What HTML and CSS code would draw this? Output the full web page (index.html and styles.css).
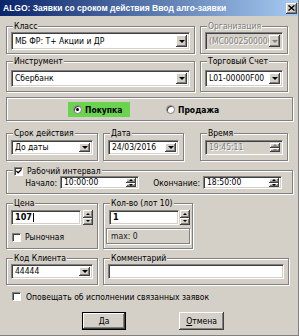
FILE: index.html
```html
<!DOCTYPE html>
<html>
<head>
<meta charset="utf-8">
<link rel="stylesheet" href="styles.css">
</head>
<body>
<div class="win">
  <div class="titlebar">
    <span class="title">ALGO: Заявки со сроком действия Ввод алго-заявки</span>
    <span class="close"><svg width="7" height="6" viewBox="0 0 7 6"><path d="M0.5 0.5 L6.5 5.5 M6.5 0.5 L0.5 5.5" stroke="#000" stroke-width="1.4"/></svg></span>
  </div>
  <div class="content">
    <div class="row r1">
      <div class="grp g-wide g-r1">
        <span class="lbl">Класс</span>
        <div class="field h18"><span class="val">МБ ФР: Т+ Акции и ДР</span><span class="btn dd"><i class="tri"></i></span></div>
      </div>
      <div class="grp g-right g-r1">
        <span class="lbl dis-text">Организация</span>
        <div class="field h18 disabled"><span class="val clip">(МС0002500000</span><span class="btn dd"><i class="tri gray"></i></span></div>
      </div>
    </div>

    <div class="row r2">
      <div class="grp g-wide g-r2">
        <span class="lbl">Инструмент</span>
        <div class="field h17"><span class="val">Сбербанк</span><span class="btn dd"><i class="tri"></i></span></div>
      </div>
      <div class="grp g-right g-r2">
        <span class="lbl">Торговый Счет</span>
        <div class="field h17"><span class="val">L01-00000F00</span><span class="btn dd"><i class="tri"></i></span></div>
      </div>
    </div>

    <div class="grp g-full radios">
      <div class="radio-item buy">
        <span class="radio on"></span><span class="rtext">Покупка</span>
      </div>
      <div class="radio-item sell">
        <span class="radio"></span><span class="rtext">Продажа</span>
      </div>
    </div>

    <div class="row r3">
      <div class="grp g-left g-r3">
        <span class="lbl">Срок действия</span>
        <div class="field h15"><span class="val">До даты</span><span class="btn dd"><i class="tri"></i></span></div>
      </div>
      <div class="grp g-date g-r3">
        <span class="lbl">Дата</span>
        <div class="field h15"><span class="val">24/03/2016</span><span class="btn dd"><i class="tri"></i></span></div>
      </div>
      <div class="grp g-time g-r3">
        <span class="lbl">Время</span>
        <div class="field h15 disabled"><span class="val">19:45:11</span><span class="spin"><span class="btn half"><i class="tri up gray"></i></span><span class="btn half"><i class="tri gray"></i></span></span></div>
      </div>
    </div>

    <div class="grp g-full work">
      <span class="lbl chk-lbl"><span class="check on"><svg width="7" height="7" viewBox="0 0 7 7"><path d="M0.5 3 L2.5 5 L6.5 1" fill="none" stroke="#000" stroke-width="1.5"/></svg></span>Рабочий интервал</span>
      <div class="work-row">
        <span class="tlabel tl1">Начало:</span>
        <div class="field h13 tin"><span class="val">10:00:00</span><span class="spin"><span class="btn half"><i class="tri up"></i></span><span class="btn half"><i class="tri"></i></span></span></div>
        <span class="tlabel tl2">Окончание:</span>
        <div class="field h13 tin"><span class="val">18:50:00</span><span class="spin"><span class="btn half"><i class="tri up"></i></span><span class="btn half"><i class="tri"></i></span></span></div>
      </div>
    </div>

    <div class="row r5">
      <div class="grp g-left price">
        <span class="lbl">Цена</span>
        <div class="numrow">
          <div class="field h15 num"><span class="val bold">107<i class="caret"></i></span></div>
          <span class="bspin"><span class="btn half"><i class="tri up"></i></span><span class="btn half"><i class="tri"></i></span></span>
        </div>
        <div class="cbrow"><span class="check"></span><span>Рыночная</span></div>
      </div>
      <div class="grp g-qty qty">
        <span class="lbl">Кол-во (лот 10)</span>
        <div class="numrow">
          <div class="field h15 num"><span class="val bold">1</span></div>
          <span class="bspin sm"><span class="btn half"><i class="tri up"></i></span><span class="btn half"><i class="tri"></i></span></span>
        </div>
        <div class="maxbox">max: 0</div>
      </div>
    </div>

    <div class="row r6">
      <div class="grp g-left g-r6">
        <span class="lbl">Код Клиента</span>
        <div class="field h15"><span class="val">44444</span><span class="btn dd"><i class="tri"></i></span></div>
      </div>
      <div class="grp g-comm g-r6">
        <span class="lbl">Комментарий</span>
        <div class="field h15"><span class="val"></span></div>
      </div>
    </div>

    <div class="notify"><span class="check"></span><span>Оповещать об исполнении связанных заявок</span></div>

    <div class="buttons">
      <span class="pbtn def">Да</span>
      <span class="pbtn cancel"><u>О</u>тмена</span>
    </div>
  </div>
</div>
</body>
</html>
```

FILE: styles.css
```css
* { box-sizing: border-box; }
html, body { margin: 0; padding: 0; }
body {
  width: 299px;
  height: 336px;
  overflow: hidden;
  background: #d4d0c8;
  font-family: "DejaVu Sans Condensed", "Liberation Sans", sans-serif;
  font-size: 8.5px;
  color: #000;
}
.win {
  width: 299px;
  height: 336px;
  background: #d4d0c8;
  display: flex;
  flex-direction: column;
  border-right: 1px solid #808080;
  border-bottom: 1px solid #808080;
}
.titlebar {
  height: 16px;
  flex: none;
  background: linear-gradient(to right, #0a246a, #a6caf0);
  display: flex;
  align-items: center;
  justify-content: space-between;
  padding: 0 1px 0 3px;
}
.title {
  color: #fff;
  font-family: "Liberation Sans", sans-serif;
  font-weight: bold;
  font-size: 8.5px;
  white-space: nowrap;
}
.close {
  width: 11px;
  height: 11px;
  background: #d4d0c8;
  box-shadow: inset -1px -1px #404040, inset 1px 1px #fff, inset -2px -2px #808080;
  display: flex;
  align-items: center;
  justify-content: center;
}
.content {
  padding-left: 6px;
  display: flex;
  flex-direction: column;
}
.row { display: flex; }

/* group boxes */
.grp {
  position: relative;
  border: 1px solid #808080;
  box-shadow: inset 1px 1px 0 #fff, 1px 1px 0 #fff;
  padding: 5px 4px 3px 4px;
  display: flex;
  flex-direction: column;
}
.lbl {
  position: absolute;
  top: -6px;
  left: 6px;
  padding: 0 1px;
  background: #d4d0c8;
  line-height: 10px;
  white-space: nowrap;
}
.dis-text { color: #808080; text-shadow: 1px 1px 0 #fff; }

.r1 { margin-top: 10px; }
.r2 { margin-top: 7px; }
.g-wide { width: 189px; }
.g-right { width: 88px; margin-left: 5px; }
.g-r1 { padding-top: 5px; padding-bottom: 3px; }
.g-r2 { padding-top: 8px; padding-bottom: 4px; }

.g-full { width: 287px; }
.radios {
  margin-top: 5px;
  flex-direction: row;
  align-items: center;
  padding: 4px 4px 3px 4px;
}
.radio-item { display: flex; align-items: center; height: 15px; font-weight: bold; }
.buy { margin-left: 57px; width: 62px; background: #6ad44e; padding-left: 5px; }
.sell { margin-left: 36px; }
.radio {
  width: 9px;
  height: 9px;
  border-radius: 50%;
  background: #fff;
  border: 1px solid #808080;
  box-shadow: inset 1px 1px #404040;
  display: flex;
  align-items: center;
  justify-content: center;
  flex: none;
}
.radio.on::after {
  content: "";
  width: 3px;
  height: 3px;
  border-radius: 50%;
  background: #000;
}
.rtext { margin-left: 3px; }

.r3 { margin-top: 12px; }
.g-r3 { padding-top: 6px; padding-bottom: 5px; }
.g-left { width: 92px; }
.g-date { width: 81px; margin-left: 5px; }
.g-time { width: 88px; margin-left: 16px; }

.work { margin-top: 9px; padding: 5px 4px 4px 4px; }
.chk-lbl { left: 6px; top: -5px; display: flex; align-items: center; gap: 4px; }
.work-row { display: flex; align-items: center; }
.tlabel { text-align: right; padding-right: 3px; white-space: nowrap; }
.tl1 { width: 49px; }
.tl2 { width: 64px; }
.tin { width: 79px; }

.r5 { margin-top: 9px; }
.price { padding: 6px 4px 6px 4px; }
.qty { width: 90px; margin-left: 5px; padding: 6px 2px 3px 2px; }
.g-qty .numrow { padding-left: 3px; }
.numrow { display: flex; align-items: stretch; }
.num { width: 70px; }
.bspin {
  width: 10px;
  margin-left: 2px;
  display: flex;
  flex-direction: column;
}
.bspin.sm { margin-left: 1px; }
.cbrow { display: flex; align-items: center; gap: 4px; margin-top: 7px; padding-left: 1px; }
.maxbox {
  margin-top: 3px;
  height: 16px;
  border: 1px solid #808080;
  box-shadow: inset 1px 1px 0 #fff, 1px 1px 0 #fff;
  display: flex;
  align-items: center;
  padding-left: 4px;
  color: #202020;
}

.r6 { margin-top: 9px; }
.g-r6 { padding-top: 5px; padding-bottom: 5px; }
.g-comm { width: 186px; margin-left: 5px; }

.notify { margin-top: 7px; display: flex; align-items: center; gap: 5px; padding-left: 6px; height: 9px; }

.buttons { margin-top: 11px; display: flex; }
.pbtn {
  height: 18px;
  display: flex;
  align-items: center;
  justify-content: center;
  background: #d4d0c8;
  box-shadow: inset -1px -1px #404040, inset 1px 1px #fff, inset -2px -2px #808080;
}
.def {
  width: 44px;
  margin-left: 76px;
  border: 1px solid #000;
}
.cancel { width: 45px; margin-left: 53px; }
.cancel u { text-decoration: underline; }

/* fields */
.field {
  background: #fff;
  border: 1px solid;
  border-color: #808080 #fff #fff #808080;
  box-shadow: inset 1px 1px #404040, inset -1px -1px #d4d0c8;
  display: flex;
  align-items: stretch;
  padding: 2px 2px 2px 2px;
}
.field.disabled { background: #d4d0c8; }
.field.disabled .val { color: #808080; text-shadow: 1px 1px 0 #fff; }
.h18 { height: 18px; }
.h17 { height: 17px; }
.h15 { height: 15px; }
.h13 { height: 13px; padding-top: 1px; padding-bottom: 1px; }
.val {
  flex: 1;
  display: flex;
  align-items: center;
  padding-left: 1px;
  white-space: nowrap;
  line-height: 9px;
}
.val.clip { overflow: hidden; }
.val.bold { font-weight: bold; font-size: 9px; }
.caret { display: inline-block; width: 1px; height: 9px; background: #000; margin-left: 1px; }

.btn {
  background: #d4d0c8;
  box-shadow: inset -1px -1px #404040, inset 1px 1px #fff, inset -2px -2px #808080;
  display: flex;
  align-items: center;
  justify-content: center;
}
.dd { width: 11px; flex: none; }
.spin { width: 10px; flex: none; display: flex; flex-direction: column; }
.half { flex: 1; }
.tri {
  width: 0;
  height: 0;
  border-left: 3px solid transparent;
  border-right: 3px solid transparent;
  border-top: 3px solid #000;
}
.half .tri {
  border-left-width: 2px;
  border-right-width: 2px;
  border-top-width: 2px;
}
.tri.up {
  border-top: 0;
  border-bottom: 2px solid #000;
}
.tri.gray { border-top-color: #808080; }
.tri.up.gray { border-bottom-color: #808080; }

.check {
  width: 9px;
  height: 9px;
  flex: none;
  background: #fff;
  border: 1px solid;
  border-color: #808080 #fff #fff #808080;
  box-shadow: inset 1px 1px #404040;
  display: flex;
  align-items: center;
  justify-content: center;
}
.check svg { margin-left: 1px; margin-top: 1px; }
```
